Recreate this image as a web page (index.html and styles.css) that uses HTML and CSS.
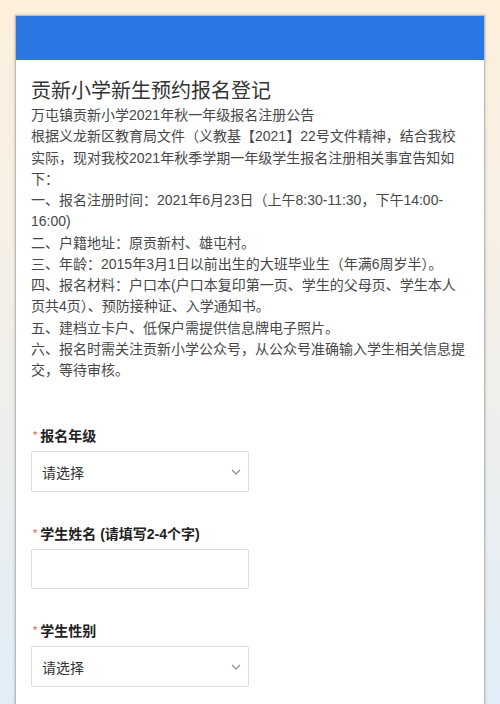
FILE: index.html
```html
<!DOCTYPE html>
<html lang="zh-CN">
<head>
    <meta charset="UTF-8">
    <meta name="viewport" content="width=device-width, initial-scale=1.0">
    <title>贡新小学新生预约报名登记</title>
    <link rel="stylesheet" href="styles.css">
</head>
<body>
    <div class="card">
        <div class="banner"></div>
        <div class="content">
            <h1>贡新小学新生预约报名登记</h1>
            <div class="desc">
                <p>万屯镇贡新小学2021年秋一年级报名注册公告</p>
                <p>根据义龙新区教育局文件（义教基【2021】22号文件精神，结合我校实际，现对我校2021年秋季学期一年级学生报名注册相关事宜告知如下：</p>
                <p>一、报名注册时间：2021年6月23日（上午8:30-11:30，下午14:00-16:00)</p>
                <p>二、户籍地址：原贡新村、雄屯村。</p>
                <p>三、年龄：2015年3月1日以前出生的大班毕业生（年满6周岁半）。</p>
                <p>四、报名材料：户口本(户口本复印第一页、学生的父母页、学生本人页共4页）、预防接种证、入学通知书。</p>
                <p>五、建档立卡户、低保户需提供信息牌电子照片。</p>
                <p>六、报名时需关注贡新小学公众号，从公众号准确输入学生相关信息提交，等待审核。</p>
            </div>

            <div class="field">
                <label><span class="req">*</span>报名年级</label>
                <div class="select">
                    <span>请选择</span>
                    <svg class="arrow" width="10" height="6" viewBox="0 0 10 6"><path d="M1 1l4 4 4-4" fill="none" stroke="#888" stroke-width="1.1"/></svg>
                </div>
            </div>

            <div class="field">
                <label><span class="req">*</span>学生姓名 (请填写2-4个字)</label>
                <input type="text">
            </div>

            <div class="field">
                <label><span class="req">*</span>学生性别</label>
                <div class="select">
                    <span>请选择</span>
                    <svg class="arrow" width="10" height="6" viewBox="0 0 10 6"><path d="M1 1l4 4 4-4" fill="none" stroke="#888" stroke-width="1.1"/></svg>
                </div>
            </div>
        </div>
    </div>
</body>
</html>
```

FILE: styles.css
```css
body {
    margin: 0;
    padding: 15px 15px 0;
    font-family: "Liberation Sans", "Noto Sans CJK SC", sans-serif;
    background: linear-gradient(to bottom, #fdf0dc 0%, #f3efe8 40%, #ddedfb 100%);
    min-height: 704px;
    box-sizing: border-box;
}
.card {
    background-color: white;
    border: 1px solid #b9b9b9;
    box-shadow: 0 0 3px rgba(0,0,0,0.2);
}
.banner {
    height: 44px;
    background-color: #2a76e2;
}
.content {
    padding: 17px 15px 60px;
}
h1 {
    margin: 0;
    font-size: 20px;
    line-height: 28px;
    font-weight: normal;
    color: #333;
}
.desc {
    font-size: 14px;
    line-height: 21.25px;
    color: #484848;
    margin-bottom: 44px;
}
.desc p {
    margin: 0;
}
.field {
    margin-bottom: 31px;
}
label {
    display: block;
    font-size: 14px;
    line-height: 21px;
    height: 21px;
    font-weight: bold;
    color: #222;
    margin-bottom: 5px;
}
.req {
    color: #e05252;
    font-size: 11px;
    font-weight: normal;
    vertical-align: 2px;
    margin: 0 3px 0 2px;
}
.select, input {
    position: relative;
    display: flex;
    align-items: center;
    width: 218px;
    height: 40px;
    box-sizing: border-box;
    border: 1px solid #dcdcdc;
    border-radius: 2px;
    padding: 0 10px;
    font-size: 14px;
    color: #333;
    background-color: white;
}
.select {
    height: 41px;
}
.arrow {
    position: absolute;
    right: 7px;
    top: 17px;
}
```
